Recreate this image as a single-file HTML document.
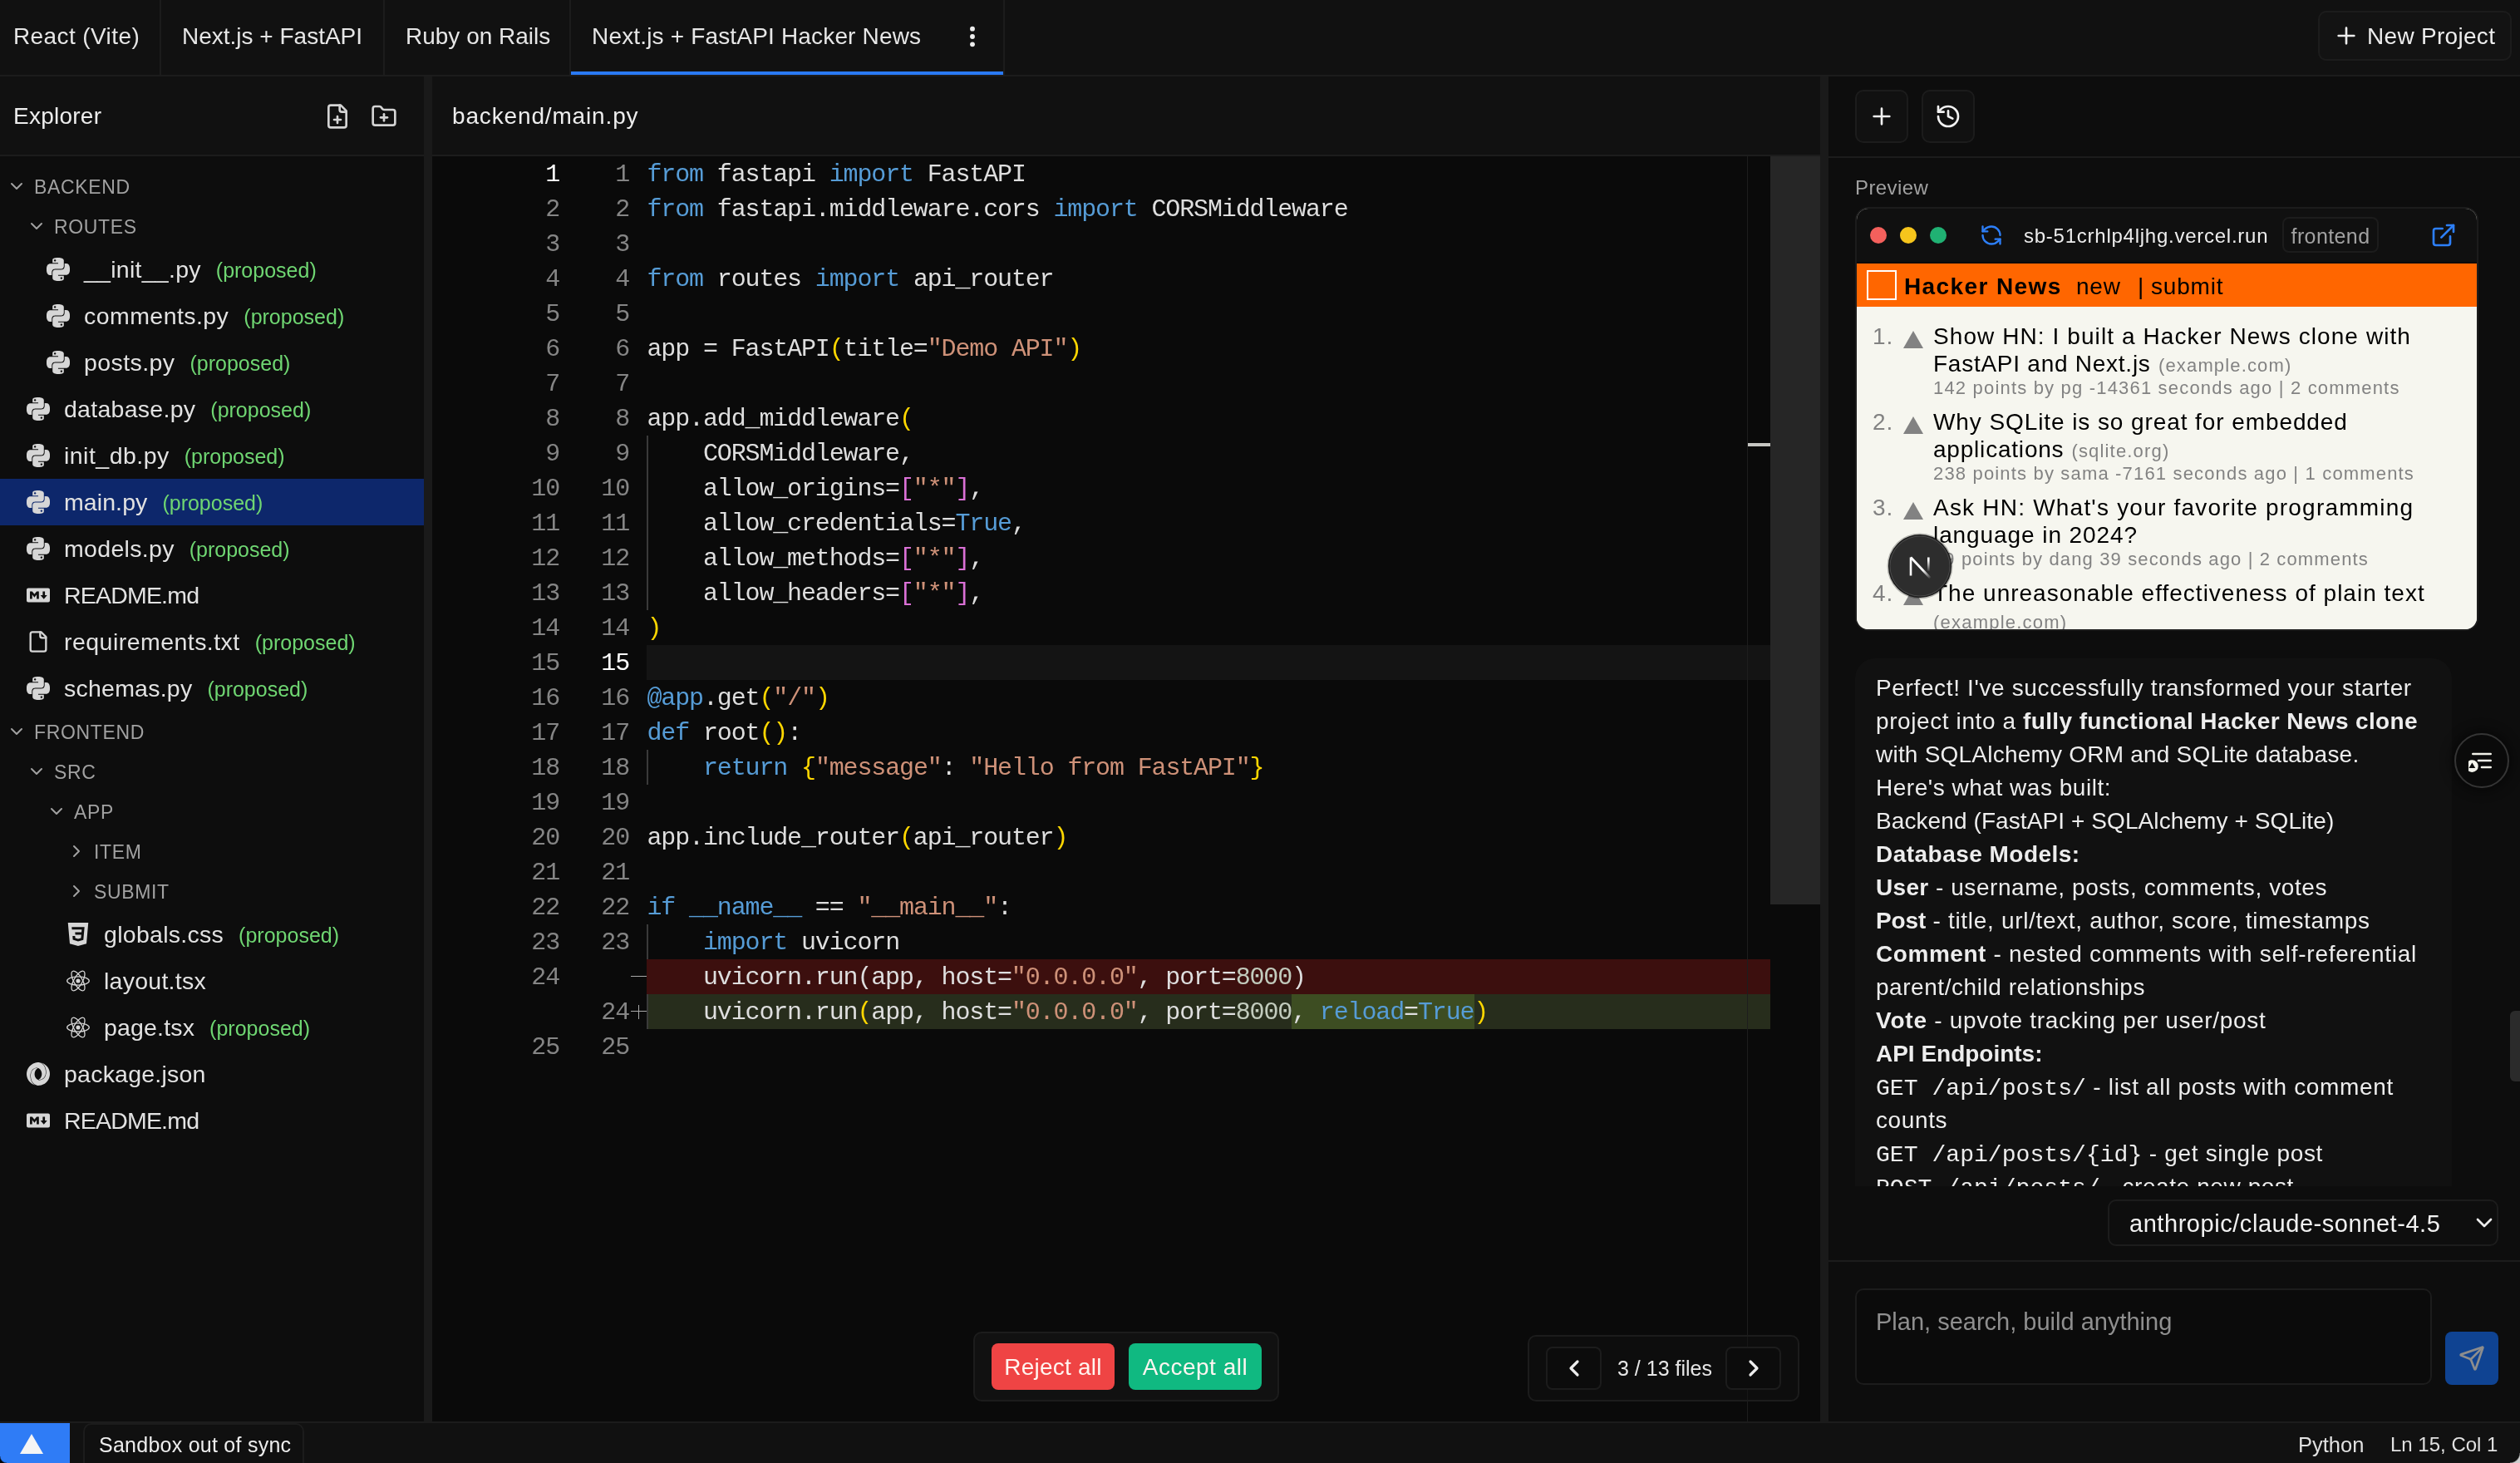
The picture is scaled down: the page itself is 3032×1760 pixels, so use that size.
<!DOCTYPE html>
<html>
<head>
<meta charset="utf-8">
<title>IDE</title>
<style>
*{box-sizing:border-box;margin:0;padding:0}
html,body{width:3032px;height:1760px;overflow:hidden;background:#0d0d0d;font-family:"Liberation Sans",sans-serif}
body{position:relative;font-family:"Liberation Sans",sans-serif;color:#ededed;font-size:28px}
#root{position:absolute;left:0;top:0;width:3032px;height:1760px;overflow:hidden;will-change:transform}
.abs{position:absolute}
svg{display:block}
/* ---------- top tab bar ---------- */
#tabbar{position:absolute;left:0;top:0;width:3032px;height:92px;background:#111111;border-bottom:2px solid #1c1c1c}
.tab{position:absolute;top:0;height:90px;border-right:2px solid #1c1c1c;line-height:88px;font-size:28px;color:#e6e6e6;white-space:nowrap}
.tab span{position:absolute;top:0;left:0}
#newproj{position:absolute;left:2789px;top:13px;width:233px;height:60px;border:2px solid #1c1c1c;border-radius:10px;background:#131313}
/* ---------- sidebar ---------- */
#sidebar{position:absolute;left:0;top:92px;width:510px;height:1618px;background:#0d0d0d}
#sidehead{position:absolute;left:0;top:0;width:510px;height:96px;background:#111111;border-bottom:2px solid #1c1c1c}
.split{position:absolute;top:92px;width:10px;height:1618px;background:#1a1a1a}
.row{position:absolute;left:0;width:510px;white-space:nowrap}
.frow{height:56px;line-height:56px;font-size:28.5px;color:#e2e2e2}
.drow{height:48px;line-height:50px;font-size:23px;color:#a1a1a1;letter-spacing:.65px}
.row .t{position:absolute;top:0}
.row .p{color:#6fd672;font-size:25px;margin-left:18px}
.row svg{position:absolute}
.sel{background:#0d276b}
/* ---------- editor ---------- */
#editor{position:absolute;left:520px;top:92px;width:1670px;height:1618px;background:#0a0a0a}
#edhead{position:absolute;left:0;top:0;width:1670px;height:96px;background:#111111;border-bottom:2px solid #1c1c1c}
#code{position:absolute;left:0;top:96px;width:1670px;height:1522px;font-family:"Liberation Mono",monospace;font-size:30px;letter-spacing:-1.143px;line-height:44px;white-space:pre}
.ln{position:absolute;left:0;width:1670px;height:42px}
.ln .a,.ln .b{position:absolute;top:0;text-align:right;color:#858585}
.ln .a{left:0;width:153px}
.ln .b{left:153px;width:84px}
.lbg{position:absolute;left:258px;top:0;width:1352px;height:42px}
.ins{}
.ln .w{color:#ffffff}
.ln .c{position:absolute;left:258.5px;top:0;color:#dedede}
.k{color:#569cd6}.s{color:#ce9178}.y{color:#ffd700}.m{color:#da70d6}.n{color:#c2cbbd}.w{color:#ffffff}
.guide{position:absolute;left:258px;width:2px;background:#3a3a3a}
.btn{height:56px;line-height:58px;border-radius:8px;text-align:center;font-size:28px;color:#fff5f0}
.nbtn{width:67px;height:52px;border:2px solid #1c1c1c;border-radius:8px;background:#0c0c0c}
/* ---------- right panel ---------- */
#right{position:absolute;left:2200px;top:92px;width:832px;height:1618px;background:#0d0d0d}
.ibtn{position:absolute;width:64px;height:64px;border:2px solid #1c1c1c;border-radius:10px;background:#111111}
#card{position:absolute;left:32px;top:157px;width:750px;height:510px;border:2px solid #1c1c1c;border-radius:16px;overflow:hidden;background:#f6f6ef}
.dot{position:absolute;top:22px;width:20px;height:20px;border-radius:50%}
#hn{position:absolute;left:0;top:66px;width:746px;height:440px;background:#f6f6ef;color:#000;overflow:hidden}
.hb{font-weight:bold;font-size:28px;line-height:36px;letter-spacing:1.4px;white-space:nowrap;color:#000}
.ht{font-size:28px;line-height:36px;letter-spacing:.8px;white-space:nowrap;color:#000}
.hnum{position:absolute;left:19px;font-size:28px;line-height:34px;color:#828282;letter-spacing:1px}
.htri{position:absolute;left:56px;width:0;height:0;border-left:12px solid transparent;border-right:12px solid transparent;border-bottom:21px solid #828282}
.htitle{position:absolute;left:92px;font-size:28px;line-height:33px;color:#000;letter-spacing:1.1px;white-space:nowrap}
.hsite{position:absolute;font-size:22px;line-height:26px;color:#828282;white-space:nowrap}
.hsub{position:absolute;left:92px;font-size:22px;line-height:26px;color:#828282;letter-spacing:1.15px;white-space:nowrap}
#chat{position:absolute;left:0;top:667px;width:832px;height:668px;overflow:hidden}
#bubble{position:absolute;left:32px;top:33px;width:718px;height:800px;background:#111111;border-radius:24px;font-size:28px;color:#ededed}
.cl{position:absolute;left:25px;height:40px;line-height:40px;white-space:pre}
.cl code{font-family:"Liberation Mono",monospace;font-size:28.1px;letter-spacing:0;line-height:20px}
/* ---------- status ---------- */
#status{position:absolute;left:0;top:1710px;width:3032px;height:50px;background:#111111;border-top:2px solid #1c1c1c;font-size:25px;color:#e0e0e0}
</style>
</head>
<body>
<div id="root">

<!-- TABBAR -->
<div id="tabbar">
  <div class="tab" style="left:0;width:194px"><span style="left:16px;letter-spacing:.4px">React (Vite)</span></div>
  <div class="tab" style="left:194px;width:269px"><span style="left:25px">Next.js + FastAPI</span></div>
  <div class="tab" style="left:463px;width:224px"><span style="left:25px">Ruby on Rails</span></div>
  <div class="tab" style="left:687px;width:522px"><div class="abs" style="left:0;top:86px;width:520px;height:4px;background:#2a7af5"></div><span style="left:25px;letter-spacing:.17px">Next.js + FastAPI Hacker News</span>
    <svg style="position:absolute;left:467px;top:28px" width="32" height="32" viewBox="0 0 24 24" fill="#ededed"><circle cx="12" cy="5" r="2.2"/><circle cx="12" cy="12" r="2.2"/><circle cx="12" cy="19" r="2.2"/></svg>
  </div>
  <div id="newproj">
    <svg style="position:absolute;left:16px;top:12px" width="32" height="32" viewBox="0 0 24 24" fill="none" stroke="#ededed" stroke-width="2" stroke-linecap="round"><path d="M5 12h14M12 5v14"/></svg>
    <span style="position:absolute;left:57px;top:0;line-height:57px;font-size:28px;letter-spacing:.3px;white-space:nowrap">New Project</span>
  </div>
</div>

<!-- SIDEBAR -->
<div id="sidebar">
  <div id="sidehead">
    <span class="abs" style="left:16px;top:0;line-height:95px;font-size:28px;letter-spacing:.25px">Explorer</span>
    <svg class="abs" style="left:390px;top:32px" width="32" height="32" viewBox="0 0 24 24" fill="none" stroke="#d4d4d4" stroke-width="2" stroke-linecap="round" stroke-linejoin="round"><path d="M15 2H6a2 2 0 0 0-2 2v16a2 2 0 0 0 2 2h12a2 2 0 0 0 2-2V7Z"/><path d="M14 2v4a2 2 0 0 0 2 2h4"/><path d="M9 15h6"/><path d="M12 18v-6"/></svg>
    <svg class="abs" style="left:446px;top:32px" width="32" height="32" viewBox="0 0 24 24" fill="none" stroke="#d4d4d4" stroke-width="2" stroke-linecap="round" stroke-linejoin="round"><path d="M12 10v6"/><path d="M9 13h6"/><path d="M20 20a2 2 0 0 0 2-2V8a2 2 0 0 0-2-2h-7.9a2 2 0 0 1-1.69-.9L9.6 3.9A2 2 0 0 0 7.93 3H4a2 2 0 0 0-2 2v13a2 2 0 0 0 2 2Z"/></svg>
  </div>
  <div id="tree">
<div class="row drow" style="top:108px"><svg style="left:8px;top:12px" width="24" height="24" viewBox="0 0 24 24" fill="none" stroke="#a1a1a1" stroke-width="2" stroke-linecap="round" stroke-linejoin="round"><path d="m6 9 6 6 6-6"/></svg><span class="t" style="left:41px">BACKEND</span></div>
<div class="row drow" style="top:156px"><svg style="left:32px;top:12px" width="24" height="24" viewBox="0 0 24 24" fill="none" stroke="#a1a1a1" stroke-width="2" stroke-linecap="round" stroke-linejoin="round"><path d="m6 9 6 6 6-6"/></svg><span class="t" style="left:65px">ROUTES</span></div>
<div class="row frow" style="top:204px"><svg style="left:56px;top:14px" width="28" height="28" viewBox="0 0 24 24" fill="#d6d6d6"><path d="M14.25.18l.9.2.73.26.59.3.45.32.34.34.25.34.16.33.1.3.04.26.02.2-.01.13V8.5l-.05.63-.13.55-.21.46-.26.38-.3.31-.33.25-.35.19-.35.14-.33.1-.3.07-.26.04-.21.02H8.77l-.69.05-.59.14-.5.22-.41.27-.33.32-.27.35-.2.36-.15.37-.1.35-.07.32-.04.27-.02.21v3.06H3.17l-.21-.03-.28-.07-.32-.12-.35-.18-.36-.26-.36-.36-.35-.46-.32-.59-.28-.73-.21-.88-.14-1.05-.05-1.23.06-1.22.16-1.04.24-.87.32-.71.36-.57.4-.44.42-.33.42-.24.4-.16.36-.1.32-.05.24-.01h.16l.06.01h8.16v-.83H6.18l-.01-2.75-.02-.37.05-.34.11-.31.17-.28.25-.26.31-.23.38-.2.44-.18.51-.15.58-.12.64-.1.71-.06.77-.04.84-.02 1.27.05zm-6.3 1.98l-.23.33-.08.41.08.41.23.34.33.22.41.09.41-.09.33-.22.23-.34.08-.41-.08-.41-.23-.33-.33-.22-.41-.09-.41.09zm13.09 3.95l.28.06.32.12.35.18.36.27.36.35.35.47.32.59.28.73.21.88.14 1.04.05 1.23-.06 1.23-.16 1.04-.24.86-.32.71-.36.57-.4.45-.42.33-.42.24-.4.16-.36.09-.32.05-.24.02-.16-.01h-8.22v.82h5.84l.01 2.76.02.36-.05.34-.11.31-.17.29-.25.25-.31.24-.38.2-.44.17-.51.15-.58.13-.64.09-.71.07-.77.04-.84.01-1.27-.04-1.07-.14-.9-.2-.73-.25-.59-.3-.45-.33-.34-.34-.25-.34-.16-.33-.1-.3-.04-.25-.02-.2.01-.13v-5.34l.05-.64.13-.54.21-.46.26-.38.3-.32.33-.24.35-.2.35-.14.33-.1.3-.06.26-.04.21-.02.13-.01h5.84l.69-.05.59-.14.5-.21.41-.28.33-.32.27-.35.2-.36.15-.36.1-.35.07-.32.04-.28.02-.21V6.07h2.09l.14.01zm-6.47 14.25l-.23.33-.08.41.08.41.23.33.33.23.41.08.41-.08.33-.23.23-.33.08-.41-.08-.41-.23-.33-.33-.23-.41-.08-.41.08z"/></svg><span class="t" style="left:101px"><span style="letter-spacing:0.268px">__init__.py</span><span class="p">(proposed)</span></span></div>
<div class="row frow" style="top:260px"><svg style="left:56px;top:14px" width="28" height="28" viewBox="0 0 24 24" fill="#d6d6d6"><path d="M14.25.18l.9.2.73.26.59.3.45.32.34.34.25.34.16.33.1.3.04.26.02.2-.01.13V8.5l-.05.63-.13.55-.21.46-.26.38-.3.31-.33.25-.35.19-.35.14-.33.1-.3.07-.26.04-.21.02H8.77l-.69.05-.59.14-.5.22-.41.27-.33.32-.27.35-.2.36-.15.37-.1.35-.07.32-.04.27-.02.21v3.06H3.17l-.21-.03-.28-.07-.32-.12-.35-.18-.36-.26-.36-.36-.35-.46-.32-.59-.28-.73-.21-.88-.14-1.05-.05-1.23.06-1.22.16-1.04.24-.87.32-.71.36-.57.4-.44.42-.33.42-.24.4-.16.36-.1.32-.05.24-.01h.16l.06.01h8.16v-.83H6.18l-.01-2.75-.02-.37.05-.34.11-.31.17-.28.25-.26.31-.23.38-.2.44-.18.51-.15.58-.12.64-.1.71-.06.77-.04.84-.02 1.27.05zm-6.3 1.98l-.23.33-.08.41.08.41.23.34.33.22.41.09.41-.09.33-.22.23-.34.08-.41-.08-.41-.23-.33-.33-.22-.41-.09-.41.09zm13.09 3.95l.28.06.32.12.35.18.36.27.36.35.35.47.32.59.28.73.21.88.14 1.04.05 1.23-.06 1.23-.16 1.04-.24.86-.32.71-.36.57-.4.45-.42.33-.42.24-.4.16-.36.09-.32.05-.24.02-.16-.01h-8.22v.82h5.84l.01 2.76.02.36-.05.34-.11.31-.17.29-.25.25-.31.24-.38.2-.44.17-.51.15-.58.13-.64.09-.71.07-.77.04-.84.01-1.27-.04-1.07-.14-.9-.2-.73-.25-.59-.3-.45-.33-.34-.34-.25-.34-.16-.33-.1-.3-.04-.25-.02-.2.01-.13v-5.34l.05-.64.13-.54.21-.46.26-.38.3-.32.33-.24.35-.2.35-.14.33-.1.3-.06.26-.04.21-.02.13-.01h5.84l.69-.05.59-.14.5-.21.41-.28.33-.32.27-.35.2-.36.15-.36.1-.35.07-.32.04-.28.02-.21V6.07h2.09l.14.01zm-6.47 14.25l-.23.33-.08.41.08.41.23.33.33.23.41.08.41-.08.33-.23.23-.33.08-.41-.08-.41-.23-.33-.33-.23-.41-.08-.41.08z"/></svg><span class="t" style="left:101px"><span style="letter-spacing:0.439px">comments.py</span><span class="p">(proposed)</span></span></div>
<div class="row frow" style="top:316px"><svg style="left:56px;top:14px" width="28" height="28" viewBox="0 0 24 24" fill="#d6d6d6"><path d="M14.25.18l.9.2.73.26.59.3.45.32.34.34.25.34.16.33.1.3.04.26.02.2-.01.13V8.5l-.05.63-.13.55-.21.46-.26.38-.3.31-.33.25-.35.19-.35.14-.33.1-.3.07-.26.04-.21.02H8.77l-.69.05-.59.14-.5.22-.41.27-.33.32-.27.35-.2.36-.15.37-.1.35-.07.32-.04.27-.02.21v3.06H3.17l-.21-.03-.28-.07-.32-.12-.35-.18-.36-.26-.36-.36-.35-.46-.32-.59-.28-.73-.21-.88-.14-1.05-.05-1.23.06-1.22.16-1.04.24-.87.32-.71.36-.57.4-.44.42-.33.42-.24.4-.16.36-.1.32-.05.24-.01h.16l.06.01h8.16v-.83H6.18l-.01-2.75-.02-.37.05-.34.11-.31.17-.28.25-.26.31-.23.38-.2.44-.18.51-.15.58-.12.64-.1.71-.06.77-.04.84-.02 1.27.05zm-6.3 1.98l-.23.33-.08.41.08.41.23.34.33.22.41.09.41-.09.33-.22.23-.34.08-.41-.08-.41-.23-.33-.33-.22-.41-.09-.41.09zm13.09 3.95l.28.06.32.12.35.18.36.27.36.35.35.47.32.59.28.73.21.88.14 1.04.05 1.23-.06 1.23-.16 1.04-.24.86-.32.71-.36.57-.4.45-.42.33-.42.24-.4.16-.36.09-.32.05-.24.02-.16-.01h-8.22v.82h5.84l.01 2.76.02.36-.05.34-.11.31-.17.29-.25.25-.31.24-.38.2-.44.17-.51.15-.58.13-.64.09-.71.07-.77.04-.84.01-1.27-.04-1.07-.14-.9-.2-.73-.25-.59-.3-.45-.33-.34-.34-.25-.34-.16-.33-.1-.3-.04-.25-.02-.2.01-.13v-5.34l.05-.64.13-.54.21-.46.26-.38.3-.32.33-.24.35-.2.35-.14.33-.1.3-.06.26-.04.21-.02.13-.01h5.84l.69-.05.59-.14.5-.21.41-.28.33-.32.27-.35.2-.36.15-.36.1-.35.07-.32.04-.28.02-.21V6.07h2.09l.14.01zm-6.47 14.25l-.23.33-.08.41.08.41.23.33.33.23.41.08.41-.08.33-.23.23-.33.08-.41-.08-.41-.23-.33-.33-.23-.41-.08-.41.08z"/></svg><span class="t" style="left:101px"><span style="letter-spacing:0.42px">posts.py</span><span class="p">(proposed)</span></span></div>
<div class="row frow" style="top:372px"><svg style="left:32px;top:14px" width="28" height="28" viewBox="0 0 24 24" fill="#d6d6d6"><path d="M14.25.18l.9.2.73.26.59.3.45.32.34.34.25.34.16.33.1.3.04.26.02.2-.01.13V8.5l-.05.63-.13.55-.21.46-.26.38-.3.31-.33.25-.35.19-.35.14-.33.1-.3.07-.26.04-.21.02H8.77l-.69.05-.59.14-.5.22-.41.27-.33.32-.27.35-.2.36-.15.37-.1.35-.07.32-.04.27-.02.21v3.06H3.17l-.21-.03-.28-.07-.32-.12-.35-.18-.36-.26-.36-.36-.35-.46-.32-.59-.28-.73-.21-.88-.14-1.05-.05-1.23.06-1.22.16-1.04.24-.87.32-.71.36-.57.4-.44.42-.33.42-.24.4-.16.36-.1.32-.05.24-.01h.16l.06.01h8.16v-.83H6.18l-.01-2.75-.02-.37.05-.34.11-.31.17-.28.25-.26.31-.23.38-.2.44-.18.51-.15.58-.12.64-.1.71-.06.77-.04.84-.02 1.27.05zm-6.3 1.98l-.23.33-.08.41.08.41.23.34.33.22.41.09.41-.09.33-.22.23-.34.08-.41-.08-.41-.23-.33-.33-.22-.41-.09-.41.09zm13.09 3.95l.28.06.32.12.35.18.36.27.36.35.35.47.32.59.28.73.21.88.14 1.04.05 1.23-.06 1.23-.16 1.04-.24.86-.32.71-.36.57-.4.45-.42.33-.42.24-.4.16-.36.09-.32.05-.24.02-.16-.01h-8.22v.82h5.84l.01 2.76.02.36-.05.34-.11.31-.17.29-.25.25-.31.24-.38.2-.44.17-.51.15-.58.13-.64.09-.71.07-.77.04-.84.01-1.27-.04-1.07-.14-.9-.2-.73-.25-.59-.3-.45-.33-.34-.34-.25-.34-.16-.33-.1-.3-.04-.25-.02-.2.01-.13v-5.34l.05-.64.13-.54.21-.46.26-.38.3-.32.33-.24.35-.2.35-.14.33-.1.3-.06.26-.04.21-.02.13-.01h5.84l.69-.05.59-.14.5-.21.41-.28.33-.32.27-.35.2-.36.15-.36.1-.35.07-.32.04-.28.02-.21V6.07h2.09l.14.01zm-6.47 14.25l-.23.33-.08.41.08.41.23.33.33.23.41.08.41-.08.33-.23.23-.33.08-.41-.08-.41-.23-.33-.33-.23-.41-.08-.41.08z"/></svg><span class="t" style="left:77px"><span style="letter-spacing:0.274px">database.py</span><span class="p">(proposed)</span></span></div>
<div class="row frow" style="top:428px"><svg style="left:32px;top:14px" width="28" height="28" viewBox="0 0 24 24" fill="#d6d6d6"><path d="M14.25.18l.9.2.73.26.59.3.45.32.34.34.25.34.16.33.1.3.04.26.02.2-.01.13V8.5l-.05.63-.13.55-.21.46-.26.38-.3.31-.33.25-.35.19-.35.14-.33.1-.3.07-.26.04-.21.02H8.77l-.69.05-.59.14-.5.22-.41.27-.33.32-.27.35-.2.36-.15.37-.1.35-.07.32-.04.27-.02.21v3.06H3.17l-.21-.03-.28-.07-.32-.12-.35-.18-.36-.26-.36-.36-.35-.46-.32-.59-.28-.73-.21-.88-.14-1.05-.05-1.23.06-1.22.16-1.04.24-.87.32-.71.36-.57.4-.44.42-.33.42-.24.4-.16.36-.1.32-.05.24-.01h.16l.06.01h8.16v-.83H6.18l-.01-2.75-.02-.37.05-.34.11-.31.17-.28.25-.26.31-.23.38-.2.44-.18.51-.15.58-.12.64-.1.71-.06.77-.04.84-.02 1.27.05zm-6.3 1.98l-.23.33-.08.41.08.41.23.34.33.22.41.09.41-.09.33-.22.23-.34.08-.41-.08-.41-.23-.33-.33-.22-.41-.09-.41.09zm13.09 3.95l.28.06.32.12.35.18.36.27.36.35.35.47.32.59.28.73.21.88.14 1.04.05 1.23-.06 1.23-.16 1.04-.24.86-.32.71-.36.57-.4.45-.42.33-.42.24-.4.16-.36.09-.32.05-.24.02-.16-.01h-8.22v.82h5.84l.01 2.76.02.36-.05.34-.11.31-.17.29-.25.25-.31.24-.38.2-.44.17-.51.15-.58.13-.64.09-.71.07-.77.04-.84.01-1.27-.04-1.07-.14-.9-.2-.73-.25-.59-.3-.45-.33-.34-.34-.25-.34-.16-.33-.1-.3-.04-.25-.02-.2.01-.13v-5.34l.05-.64.13-.54.21-.46.26-.38.3-.32.33-.24.35-.2.35-.14.33-.1.3-.06.26-.04.21-.02.13-.01h5.84l.69-.05.59-.14.5-.21.41-.28.33-.32.27-.35.2-.36.15-.36.1-.35.07-.32.04-.28.02-.21V6.07h2.09l.14.01zm-6.47 14.25l-.23.33-.08.41.08.41.23.33.33.23.41.08.41-.08.33-.23.23-.33.08-.41-.08-.41-.23-.33-.33-.23-.41-.08-.41.08z"/></svg><span class="t" style="left:77px"><span style="letter-spacing:0.47px">init_db.py</span><span class="p">(proposed)</span></span></div>
<div class="row frow sel" style="top:484px"><svg style="left:32px;top:14px" width="28" height="28" viewBox="0 0 24 24" fill="#d6d6d6"><path d="M14.25.18l.9.2.73.26.59.3.45.32.34.34.25.34.16.33.1.3.04.26.02.2-.01.13V8.5l-.05.63-.13.55-.21.46-.26.38-.3.31-.33.25-.35.19-.35.14-.33.1-.3.07-.26.04-.21.02H8.77l-.69.05-.59.14-.5.22-.41.27-.33.32-.27.35-.2.36-.15.37-.1.35-.07.32-.04.27-.02.21v3.06H3.17l-.21-.03-.28-.07-.32-.12-.35-.18-.36-.26-.36-.36-.35-.46-.32-.59-.28-.73-.21-.88-.14-1.05-.05-1.23.06-1.22.16-1.04.24-.87.32-.71.36-.57.4-.44.42-.33.42-.24.4-.16.36-.1.32-.05.24-.01h.16l.06.01h8.16v-.83H6.18l-.01-2.75-.02-.37.05-.34.11-.31.17-.28.25-.26.31-.23.38-.2.44-.18.51-.15.58-.12.64-.1.71-.06.77-.04.84-.02 1.27.05zm-6.3 1.98l-.23.33-.08.41.08.41.23.34.33.22.41.09.41-.09.33-.22.23-.34.08-.41-.08-.41-.23-.33-.33-.22-.41-.09-.41.09zm13.09 3.95l.28.06.32.12.35.18.36.27.36.35.35.47.32.59.28.73.21.88.14 1.04.05 1.23-.06 1.23-.16 1.04-.24.86-.32.71-.36.57-.4.45-.42.33-.42.24-.4.16-.36.09-.32.05-.24.02-.16-.01h-8.22v.82h5.84l.01 2.76.02.36-.05.34-.11.31-.17.29-.25.25-.31.24-.38.2-.44.17-.51.15-.58.13-.64.09-.71.07-.77.04-.84.01-1.27-.04-1.07-.14-.9-.2-.73-.25-.59-.3-.45-.33-.34-.34-.25-.34-.16-.33-.1-.3-.04-.25-.02-.2.01-.13v-5.34l.05-.64.13-.54.21-.46.26-.38.3-.32.33-.24.35-.2.35-.14.33-.1.3-.06.26-.04.21-.02.13-.01h5.84l.69-.05.59-.14.5-.21.41-.28.33-.32.27-.35.2-.36.15-.36.1-.35.07-.32.04-.28.02-.21V6.07h2.09l.14.01zm-6.47 14.25l-.23.33-.08.41.08.41.23.33.33.23.41.08.41-.08.33-.23.23-.33.08-.41-.08-.41-.23-.33-.33-.23-.41-.08-.41.08z"/></svg><span class="t" style="left:77px"><span style="letter-spacing:0.087px">main.py</span><span class="p">(proposed)</span></span></div>
<div class="row frow" style="top:540px"><svg style="left:32px;top:14px" width="28" height="28" viewBox="0 0 24 24" fill="#d6d6d6"><path d="M14.25.18l.9.2.73.26.59.3.45.32.34.34.25.34.16.33.1.3.04.26.02.2-.01.13V8.5l-.05.63-.13.55-.21.46-.26.38-.3.31-.33.25-.35.19-.35.14-.33.1-.3.07-.26.04-.21.02H8.77l-.69.05-.59.14-.5.22-.41.27-.33.32-.27.35-.2.36-.15.37-.1.35-.07.32-.04.27-.02.21v3.06H3.17l-.21-.03-.28-.07-.32-.12-.35-.18-.36-.26-.36-.36-.35-.46-.32-.59-.28-.73-.21-.88-.14-1.05-.05-1.23.06-1.22.16-1.04.24-.87.32-.71.36-.57.4-.44.42-.33.42-.24.4-.16.36-.1.32-.05.24-.01h.16l.06.01h8.16v-.83H6.18l-.01-2.75-.02-.37.05-.34.11-.31.17-.28.25-.26.31-.23.38-.2.44-.18.51-.15.58-.12.64-.1.71-.06.77-.04.84-.02 1.27.05zm-6.3 1.98l-.23.33-.08.41.08.41.23.34.33.22.41.09.41-.09.33-.22.23-.34.08-.41-.08-.41-.23-.33-.33-.22-.41-.09-.41.09zm13.09 3.95l.28.06.32.12.35.18.36.27.36.35.35.47.32.59.28.73.21.88.14 1.04.05 1.23-.06 1.23-.16 1.04-.24.86-.32.71-.36.57-.4.45-.42.33-.42.24-.4.16-.36.09-.32.05-.24.02-.16-.01h-8.22v.82h5.84l.01 2.76.02.36-.05.34-.11.31-.17.29-.25.25-.31.24-.38.2-.44.17-.51.15-.58.13-.64.09-.71.07-.77.04-.84.01-1.27-.04-1.07-.14-.9-.2-.73-.25-.59-.3-.45-.33-.34-.34-.25-.34-.16-.33-.1-.3-.04-.25-.02-.2.01-.13v-5.34l.05-.64.13-.54.21-.46.26-.38.3-.32.33-.24.35-.2.35-.14.33-.1.3-.06.26-.04.21-.02.13-.01h5.84l.69-.05.59-.14.5-.21.41-.28.33-.32.27-.35.2-.36.15-.36.1-.35.07-.32.04-.28.02-.21V6.07h2.09l.14.01zm-6.47 14.25l-.23.33-.08.41.08.41.23.33.33.23.41.08.41-.08.33-.23.23-.33.08-.41-.08-.41-.23-.33-.33-.23-.41-.08-.41.08z"/></svg><span class="t" style="left:77px"><span style="letter-spacing:0.312px">models.py</span><span class="p">(proposed)</span></span></div>
<div class="row frow" style="top:596px"><svg style="left:32px;top:14px" width="28" height="28" viewBox="0 0 24 24" fill="#d6d6d6"><path d="M22.27 19.385H1.73A1.73 1.73 0 010 17.655V6.345a1.73 1.73 0 011.73-1.73h20.54A1.73 1.73 0 0124 6.345v11.308a1.73 1.73 0 01-1.73 1.731zM5.769 15.923v-4.5l2.308 2.885 2.307-2.885v4.5h2.308V8.078h-2.308l-2.307 2.885-2.308-2.885H3.46v7.847zM21.232 12h-2.309V8.077h-2.307V12h-2.308l3.461 4.039z"/></svg><span class="t" style="left:77px"><span style="letter-spacing:-0.805px">README.md</span></span></div>
<div class="row frow" style="top:652px"><svg style="left:32px;top:14px" width="28" height="28" viewBox="0 0 24 24" fill="#d6d6d6"><g fill="none" stroke="#d6d6d6" stroke-width="2" stroke-linecap="round" stroke-linejoin="round"><path d="M15 2H6a2 2 0 0 0-2 2v16a2 2 0 0 0 2 2h12a2 2 0 0 0 2-2V7Z"/><path d="M14 2v4a2 2 0 0 0 2 2h4"/></g></svg><span class="t" style="left:77px"><span style="letter-spacing:0.461px">requirements.txt</span><span class="p">(proposed)</span></span></div>
<div class="row frow" style="top:708px"><svg style="left:32px;top:14px" width="28" height="28" viewBox="0 0 24 24" fill="#d6d6d6"><path d="M14.25.18l.9.2.73.26.59.3.45.32.34.34.25.34.16.33.1.3.04.26.02.2-.01.13V8.5l-.05.63-.13.55-.21.46-.26.38-.3.31-.33.25-.35.19-.35.14-.33.1-.3.07-.26.04-.21.02H8.77l-.69.05-.59.14-.5.22-.41.27-.33.32-.27.35-.2.36-.15.37-.1.35-.07.32-.04.27-.02.21v3.06H3.17l-.21-.03-.28-.07-.32-.12-.35-.18-.36-.26-.36-.36-.35-.46-.32-.59-.28-.73-.21-.88-.14-1.05-.05-1.23.06-1.22.16-1.04.24-.87.32-.71.36-.57.4-.44.42-.33.42-.24.4-.16.36-.1.32-.05.24-.01h.16l.06.01h8.16v-.83H6.18l-.01-2.75-.02-.37.05-.34.11-.31.17-.28.25-.26.31-.23.38-.2.44-.18.51-.15.58-.12.64-.1.71-.06.77-.04.84-.02 1.27.05zm-6.3 1.98l-.23.33-.08.41.08.41.23.34.33.22.41.09.41-.09.33-.22.23-.34.08-.41-.08-.41-.23-.33-.33-.22-.41-.09-.41.09zm13.09 3.95l.28.06.32.12.35.18.36.27.36.35.35.47.32.59.28.73.21.88.14 1.04.05 1.23-.06 1.23-.16 1.04-.24.86-.32.71-.36.57-.4.45-.42.33-.42.24-.4.16-.36.09-.32.05-.24.02-.16-.01h-8.22v.82h5.84l.01 2.76.02.36-.05.34-.11.31-.17.29-.25.25-.31.24-.38.2-.44.17-.51.15-.58.13-.64.09-.71.07-.77.04-.84.01-1.27-.04-1.07-.14-.9-.2-.73-.25-.59-.3-.45-.33-.34-.34-.25-.34-.16-.33-.1-.3-.04-.25-.02-.2.01-.13v-5.34l.05-.64.13-.54.21-.46.26-.38.3-.32.33-.24.35-.2.35-.14.33-.1.3-.06.26-.04.21-.02.13-.01h5.84l.69-.05.59-.14.5-.21.41-.28.33-.32.27-.35.2-.36.15-.36.1-.35.07-.32.04-.28.02-.21V6.07h2.09l.14.01zm-6.47 14.25l-.23.33-.08.41.08.41.23.33.33.23.41.08.41-.08.33-.23.23-.33.08-.41-.08-.41-.23-.33-.33-.23-.41-.08-.41.08z"/></svg><span class="t" style="left:77px"><span style="letter-spacing:0.234px">schemas.py</span><span class="p">(proposed)</span></span></div>
<div class="row drow" style="top:764px"><svg style="left:8px;top:12px" width="24" height="24" viewBox="0 0 24 24" fill="none" stroke="#a1a1a1" stroke-width="2" stroke-linecap="round" stroke-linejoin="round"><path d="m6 9 6 6 6-6"/></svg><span class="t" style="left:41px">FRONTEND</span></div>
<div class="row drow" style="top:812px"><svg style="left:32px;top:12px" width="24" height="24" viewBox="0 0 24 24" fill="none" stroke="#a1a1a1" stroke-width="2" stroke-linecap="round" stroke-linejoin="round"><path d="m6 9 6 6 6-6"/></svg><span class="t" style="left:65px">SRC</span></div>
<div class="row drow" style="top:860px"><svg style="left:56px;top:12px" width="24" height="24" viewBox="0 0 24 24" fill="none" stroke="#a1a1a1" stroke-width="2" stroke-linecap="round" stroke-linejoin="round"><path d="m6 9 6 6 6-6"/></svg><span class="t" style="left:89px">APP</span></div>
<div class="row drow" style="top:908px"><svg style="left:80px;top:12px" width="24" height="24" viewBox="0 0 24 24" fill="none" stroke="#a1a1a1" stroke-width="2" stroke-linecap="round" stroke-linejoin="round"><path d="m9 18 6-6-6-6"/></svg><span class="t" style="left:113px">ITEM</span></div>
<div class="row drow" style="top:956px"><svg style="left:80px;top:12px" width="24" height="24" viewBox="0 0 24 24" fill="none" stroke="#a1a1a1" stroke-width="2" stroke-linecap="round" stroke-linejoin="round"><path d="m9 18 6-6-6-6"/></svg><span class="t" style="left:113px">SUBMIT</span></div>
<div class="row frow" style="top:1004px"><svg style="left:80px;top:14px" width="28" height="28" viewBox="0 0 24 24" fill="#d6d6d6"><path d="M1.5 0h21l-1.91 21.563L11.977 24l-8.565-2.438L1.5 0zm17.09 4.413L5.41 4.41l.213 2.622 10.125.002-.255 2.716h-6.64l.24 2.573h6.182l-.366 3.523-2.91.804-2.956-.81-.188-2.11h-2.61l.29 3.855L12 19.288l5.373-1.53L18.59 4.414z"/></svg><span class="t" style="left:125px"><span style="letter-spacing:0.283px">globals.css</span><span class="p">(proposed)</span></span></div>
<div class="row frow" style="top:1060px"><svg style="left:80px;top:14px" width="28" height="28" viewBox="0 0 24 24" fill="#d6d6d6"><g fill="none" stroke="#d6d6d6" stroke-width="1.1"><ellipse cx="12" cy="12" rx="11.4" ry="4.4"/><ellipse cx="12" cy="12" rx="11.4" ry="4.4" transform="rotate(60 12 12)"/><ellipse cx="12" cy="12" rx="11.4" ry="4.4" transform="rotate(120 12 12)"/></g><circle cx="12" cy="12" r="2.2"/></svg><span class="t" style="left:125px"><span style="letter-spacing:0.261px">layout.tsx</span></span></div>
<div class="row frow" style="top:1116px"><svg style="left:80px;top:14px" width="28" height="28" viewBox="0 0 24 24" fill="#d6d6d6"><g fill="none" stroke="#d6d6d6" stroke-width="1.1"><ellipse cx="12" cy="12" rx="11.4" ry="4.4"/><ellipse cx="12" cy="12" rx="11.4" ry="4.4" transform="rotate(60 12 12)"/><ellipse cx="12" cy="12" rx="11.4" ry="4.4" transform="rotate(120 12 12)"/></g><circle cx="12" cy="12" r="2.2"/></svg><span class="t" style="left:125px"><span style="letter-spacing:0.17px">page.tsx</span><span class="p">(proposed)</span></span></div>
<div class="row frow" style="top:1172px"><svg style="left:32px;top:14px" width="28" height="28" viewBox="0 0 24 24" fill="#d6d6d6"><path d="M12.043 23.968c.479-.004.953-.029 1.426-.094a11.805 11.805 0 003.146-.863 12.404 12.404 0 003.793-2.542 11.977 11.977 0 002.44-3.427 11.794 11.794 0 001.02-3.476c.149-1.16.135-2.346-.045-3.499a11.96 11.96 0 00-.793-2.788 11.197 11.197 0 00-.854-1.617c-1.168-1.837-2.861-3.314-4.81-4.3a12.835 12.835 0 00-2.172-.87h-.005c.119.063.24.132.345.201.12.074.239.146.351.225a8.93 8.93 0 011.559 1.33c1.063 1.145 1.797 2.548 2.218 4.041.284.982.434 1.998.495 3.017.044.743.044 1.491-.047 2.229-.149 1.27-.554 2.51-1.228 3.596a7.475 7.475 0 01-1.903 2.084c-1.244.928-2.877 1.482-4.436 1.114a3.916 3.916 0 01-.748-.258 4.692 4.692 0 01-.779-.45 6.08 6.08 0 01-1.244-1.105 6.507 6.507 0 01-1.049-1.747 7.366 7.366 0 01-.494-2.54c-.03-1.273.225-2.553.854-3.67a6.43 6.43 0 011.663-1.918c.225-.178.464-.333.704-.479l.016-.007a5.121 5.121 0 00-1.441-.12 4.963 4.963 0 00-1.228.24c-.359.12-.704.27-1.019.45a6.146 6.146 0 00-.733.494c-.211.18-.42.36-.615.555-1.123 1.153-1.768 2.682-2.022 4.256-.15.973-.15 1.96-.091 2.95.105 1.395.391 2.787.945 4.062a8.518 8.518 0 001.348 2.173 8.14 8.14 0 003.132 2.23 7.934 7.934 0 002.113.54c.074.015.149.015.209.015zm-2.934-.398a4.102 4.102 0 01-.45-.228 8.5 8.5 0 01-2.038-1.534c-1.094-1.137-1.827-2.566-2.247-4.08a15.184 15.184 0 01-.495-3.172 12.14 12.14 0 01.046-2.082c.135-1.257.495-2.501 1.124-3.58a6.889 6.889 0 011.783-2.053 6.23 6.23 0 011.633-.9 5.363 5.363 0 013.522-.045c.029 0 .029 0 .045.03.015.015.045.015.06.03.045.016.104.045.165.074.239.12.479.271.704.42a6.294 6.294 0 012.097 2.502c.42.914.615 1.934.631 2.938.014 1.079-.18 2.157-.645 3.146a6.42 6.42 0 01-2.638 2.832c.09.03.18.045.271.075.225.044.449.074.688.074 1.468.045 2.892-.66 3.94-1.647.195-.18.375-.375.54-.585.225-.27.435-.54.614-.823.239-.375.435-.75.614-1.154a8.112 8.112 0 00.509-1.664c.196-1.004.211-2.022.149-3.026-.135-2.022-.673-4.045-1.842-5.724a9.054 9.054 0 00-.555-.719 9.868 9.868 0 00-1.063-1.034 8.477 8.477 0 00-1.363-.915 9.927 9.927 0 00-1.692-.598l-.3-.06c-.209-.03-.42-.044-.634-.06a8.453 8.453 0 00-1.015.016c-.704.045-1.412.16-2.112.337C5.799 1.227 2.863 3.566 1.3 6.67A11.834 11.834 0 00.238 9.801a11.81 11.81 0 00-.104 3.775c.12 1.02.374 2.023.778 2.977.227.57.511 1.124.825 1.648 1.094 1.783 2.683 3.236 4.51 4.24.688.39 1.408.69 2.157.944.226.074.45.15.689.21z"/></svg><span class="t" style="left:77px"><span style="letter-spacing:0.229px">package.json</span></span></div>
<div class="row frow" style="top:1228px"><svg style="left:32px;top:14px" width="28" height="28" viewBox="0 0 24 24" fill="#d6d6d6"><path d="M22.27 19.385H1.73A1.73 1.73 0 010 17.655V6.345a1.73 1.73 0 011.73-1.73h20.54A1.73 1.73 0 0124 6.345v11.308a1.73 1.73 0 01-1.73 1.731zM5.769 15.923v-4.5l2.308 2.885 2.307-2.885v4.5h2.308V8.078h-2.308l-2.307 2.885-2.308-2.885H3.46v7.847zM21.232 12h-2.309V8.077h-2.307V12h-2.308l3.461 4.039z"/></svg><span class="t" style="left:77px"><span style="letter-spacing:-0.805px">README.md</span></span></div>
</div>
</div>
<div class="split" style="left:510px"></div>

<!-- EDITOR -->
<div id="editor">
  <div id="edhead"><span class="abs" style="left:24px;top:0;line-height:95px;font-size:28px;letter-spacing:.85px">backend/main.py</span></div>
  <div id="code">
<div class="ln" style="top:0px"><span class="a w">1</span><span class="b">1</span><span class="c"><span class="k">from</span> fastapi <span class="k">import</span> FastAPI</span></div>
<div class="ln" style="top:42px"><span class="a">2</span><span class="b">2</span><span class="c"><span class="k">from</span> fastapi.middleware.cors <span class="k">import</span> CORSMiddleware</span></div>
<div class="ln" style="top:84px"><span class="a">3</span><span class="b">3</span><span class="c"></span></div>
<div class="ln" style="top:126px"><span class="a">4</span><span class="b">4</span><span class="c"><span class="k">from</span> routes <span class="k">import</span> api_router</span></div>
<div class="ln" style="top:168px"><span class="a">5</span><span class="b">5</span><span class="c"></span></div>
<div class="ln" style="top:210px"><span class="a">6</span><span class="b">6</span><span class="c">app = FastAPI<span class="y">(</span>title=<span class="s">&quot;Demo API&quot;</span><span class="y">)</span></span></div>
<div class="ln" style="top:252px"><span class="a">7</span><span class="b">7</span><span class="c"></span></div>
<div class="ln" style="top:294px"><span class="a">8</span><span class="b">8</span><span class="c">app.add_middleware<span class="y">(</span></span></div>
<div class="ln" style="top:336px"><span class="a">9</span><span class="b">9</span><span class="c">    CORSMiddleware,</span></div>
<div class="ln" style="top:378px"><span class="a">10</span><span class="b">10</span><span class="c">    allow_origins=<span class="m">[</span><span class="s">&quot;*&quot;</span><span class="m">]</span>,</span></div>
<div class="ln" style="top:420px"><span class="a">11</span><span class="b">11</span><span class="c">    allow_credentials=<span class="k">True</span>,</span></div>
<div class="ln" style="top:462px"><span class="a">12</span><span class="b">12</span><span class="c">    allow_methods=<span class="m">[</span><span class="s">&quot;*&quot;</span><span class="m">]</span>,</span></div>
<div class="ln" style="top:504px"><span class="a">13</span><span class="b">13</span><span class="c">    allow_headers=<span class="m">[</span><span class="s">&quot;*&quot;</span><span class="m">]</span>,</span></div>
<div class="ln" style="top:546px"><span class="a">14</span><span class="b">14</span><span class="c"><span class="y">)</span></span></div>
<div class="ln" style="top:588px"><div class="lbg" style="background:#141414"></div><span class="a">15</span><span class="b w">15</span><span class="c"></span></div>
<div class="ln" style="top:630px"><span class="a">16</span><span class="b">16</span><span class="c"><span class="k">@app</span>.get<span class="y">(</span><span class="s">&quot;/&quot;</span><span class="y">)</span></span></div>
<div class="ln" style="top:672px"><span class="a">17</span><span class="b">17</span><span class="c"><span class="k">def</span> root<span class="y">()</span>:</span></div>
<div class="ln" style="top:714px"><span class="a">18</span><span class="b">18</span><span class="c">    <span class="k">return</span> <span class="y">{</span><span class="s">&quot;message&quot;</span>: <span class="s">&quot;Hello from FastAPI&quot;</span><span class="y">}</span></span></div>
<div class="ln" style="top:756px"><span class="a">19</span><span class="b">19</span><span class="c"></span></div>
<div class="ln" style="top:798px"><span class="a">20</span><span class="b">20</span><span class="c">app.include_router<span class="y">(</span>api_router<span class="y">)</span></span></div>
<div class="ln" style="top:840px"><span class="a">21</span><span class="b">21</span><span class="c"></span></div>
<div class="ln" style="top:882px"><span class="a">22</span><span class="b">22</span><span class="c"><span class="k">if</span> <span class="k">__name__</span> == <span class="s">&quot;__main__&quot;</span>:</span></div>
<div class="ln" style="top:924px"><span class="a">23</span><span class="b">23</span><span class="c">    <span class="k">import</span> uvicorn</span></div>
<div class="ln" style="top:966px"><div class="lbg" style="background:#3c0f0e"></div><span class="a">24</span><span class="b"></span><div class="abs" style="left:239px;top:20px;width:19px;height:1.4px;background:#a8a8a8"></div><span class="c">    uvicorn.run(app, host=<span class="s">&quot;0.0.0.0&quot;</span>, port=<span class="n">8000</span>)</span></div>
<div class="ln" style="top:1008px"><div class="lbg" style="background:#272d1c"></div><div class="abs" style="left:1034px;top:0;width:219.5px;height:42px;background:#3d4d22"></div><span class="a"></span><span class="b">24</span><div class="abs" style="left:239px;top:20px;width:19px;height:1.4px;background:#a8a8a8"></div><div class="abs" style="left:247.8px;top:12.5px;width:1.4px;height:17px;background:#a8a8a8"></div><span class="c">    uvicorn.run<span class="y">(</span>app, host=<span class="s">&quot;0.0.0.0&quot;</span>, port=<span class="n">8000</span><span class="ins">, <span class="k">reload</span>=<span class="k">True</span></span><span class="y">)</span></span></div>
<div class="ln" style="top:1050px"><span class="a">25</span><span class="b">25</span><span class="c"></span></div>
<div class="guide" style="top:336px;height:210px"></div>
<div class="guide" style="top:714px;height:42px"></div>
<div class="guide" style="top:924px;height:42px"></div>
<div class="guide" style="top:1008px;height:42px"></div>
</div>
  <!-- overview ruler + slider -->
  <div class="abs" style="left:1582px;top:96px;width:1.3px;height:1522px;background:#1d1d1d"></div>
  <div class="abs" style="left:1610px;top:96px;width:60px;height:900px;background:#262626"></div>
  <div class="abs" style="left:1583px;top:441px;width:27px;height:4px;background:#c6c6c2"></div>
  <!-- accept / reject -->
  <div class="abs" style="left:651px;top:1510px;width:368px;height:84px;background:#111111;border:2px solid #1c1c1c;border-radius:10px">
    <div class="abs btn" style="left:20px;top:12px;width:148px;background:#ef4444;letter-spacing:.25px">Reject all</div>
    <div class="abs btn" style="left:185px;top:12px;width:160px;background:#10b981;letter-spacing:.5px">Accept all</div>
  </div>
  <!-- file nav -->
  <div class="abs" style="left:1318px;top:1514px;width:327px;height:80px;background:rgba(17,17,17,.55);border:2px solid #1c1c1c;border-radius:10px">
    <div class="abs nbtn" style="left:20px;top:12px"><svg style="left:16px;top:8px;position:absolute" width="32" height="32" viewBox="0 0 24 24" fill="none" stroke="#ededed" stroke-width="2.4" stroke-linecap="round" stroke-linejoin="round"><path d="m15 18-6-6 6-6"/></svg></div>
    <span class="abs" style="left:106px;top:0;line-height:76px;font-size:25px;color:#e6e6e6;white-space:nowrap">3 / 13 files</span>
    <div class="abs nbtn" style="left:236px;top:12px"><svg style="left:16px;top:8px;position:absolute" width="32" height="32" viewBox="0 0 24 24" fill="none" stroke="#ededed" stroke-width="2.4" stroke-linecap="round" stroke-linejoin="round"><path d="m9 18 6-6-6-6"/></svg></div>
  </div>
</div>
<div class="split" style="left:2190px"></div>

<!-- RIGHT -->
<div id="right">
  <div class="abs" style="left:0;top:0;width:832px;height:98px;border-bottom:2px solid #1c1c1c"></div>
  <div class="ibtn" style="left:32px;top:16px"><svg class="abs" style="left:14px;top:14px" width="32" height="32" viewBox="0 0 24 24" fill="none" stroke="#f2f2f2" stroke-width="2" stroke-linecap="round"><path d="M5 12h14M12 5v14"/></svg></div>
  <div class="ibtn" style="left:112px;top:16px"><svg class="abs" style="left:14px;top:14px" width="32" height="32" viewBox="0 0 24 24" fill="none" stroke="#f2f2f2" stroke-width="2" stroke-linecap="round" stroke-linejoin="round"><path d="M3 12a9 9 0 1 0 9-9 9.75 9.75 0 0 0-6.74 2.74L3 8"/><path d="M3 3v5h5"/><path d="M12 7v5l4 2"/></svg></div>
  <span class="abs" style="left:32px;top:118px;line-height:32px;font-size:24px;color:#a1a1a1;letter-spacing:.4px">Preview</span>

  <!-- preview card -->
  <div id="card">
    <div class="abs" style="left:0;top:0;width:746px;height:66px;background:#101010;border-bottom:2px solid #0a0a0a"></div>
    <div class="dot" style="left:16px;background:#f4605c"></div>
    <div class="dot" style="left:52px;background:#f6c51c"></div>
    <div class="dot" style="left:88px;background:#20b173"></div>
    <svg class="abs" style="left:148px;top:18px" width="28" height="28" viewBox="0 0 24 24" fill="none" stroke="#2d7ff9" stroke-width="2" stroke-linecap="round" stroke-linejoin="round"><path d="M21 12a9 9 0 0 0-9-9 9.75 9.75 0 0 0-6.74 2.74L3 8"/><path d="M3 3v5h5"/><path d="M3 12a9 9 0 0 0 9 9 9.75 9.75 0 0 0 6.74-2.74L21 16"/><path d="M16 16h5v5"/></svg>
    <span class="abs" style="left:201px;top:0;line-height:66px;font-size:24px;color:#ededed;letter-spacing:.75px;white-space:nowrap">sb-51crhlp4ljhg.vercel.run</span>
    <div class="abs" style="left:512px;top:10px;width:116px;height:43px;border:2px solid #1c1c1c;border-radius:8px;line-height:42px;text-align:center;font-size:25px;color:#a1a1a1;letter-spacing:.4px">frontend</div>
    <svg class="abs" style="left:690px;top:16px" width="32" height="32" viewBox="0 0 24 24" fill="none" stroke="#2d7ff9" stroke-width="2" stroke-linecap="round" stroke-linejoin="round"><path d="M15 3h6v6"/><path d="M10 14 21 3"/><path d="M18 13v6a2 2 0 0 1-2 2H5a2 2 0 0 1-2-2V8a2 2 0 0 1 2-2h6"/></svg>
    <div id="hn">
      <div class="abs" style="left:0;top:0;width:746px;height:52px;background:#ff6600"></div>
      <div class="abs" style="left:12px;top:8px;width:36px;height:36px;border:2px solid #ffffff"></div>
      <span class="abs hb" style="left:57px;top:10px">Hacker News</span>
      <span class="abs ht" style="left:264px;top:10px">new</span>
      <span class="abs ht" style="left:338px;top:10px">|</span>
      <span class="abs ht" style="left:354px;top:10px">submit</span>
      <span class="hnum" style="top:71px">1.</span><div class="htri" style="top:81px"></div>
<span class="htitle" style="top:71px;letter-spacing:1.082px">Show HN: I built a Hacker News clone with</span>
<span class="htitle" style="top:104px;letter-spacing:0.746px">FastAPI and Next.js</span>
<span class="hsite" style="top:110px;left:363px;letter-spacing:1.148px">(example.com)</span>
<span class="hsub" style="top:137px;letter-spacing:1.185px">142 points by pg -14361 seconds ago | 2 comments</span>
<span class="hnum" style="top:174px">2.</span><div class="htri" style="top:184px"></div>
<span class="htitle" style="top:174px;letter-spacing:0.912px">Why SQLite is so great for embedded</span>
<span class="htitle" style="top:207px;letter-spacing:0.794px">applications</span>
<span class="hsite" style="top:213px;left:258.4px;letter-spacing:1.173px">(sqlite.org)</span>
<span class="hsub" style="top:240px;letter-spacing:1.168px">238 points by sama -7161 seconds ago | 1 comments</span>
<span class="hnum" style="top:277px">3.</span><div class="htri" style="top:287px"></div>
<span class="htitle" style="top:277px;letter-spacing:1.214px">Ask HN: What&#x27;s your favorite programming</span>
<span class="htitle" style="top:310px;letter-spacing:0.915px">language in 2024?</span>
<span class="hsub" style="top:343px;letter-spacing:1.133px">89 points by dang 39 seconds ago | 2 comments</span>
<span class="hnum" style="top:380px">4.</span><div class="htri" style="top:390px"></div>
<span class="htitle" style="top:380px;letter-spacing:1.007px">The unreasonable effectiveness of plain text</span>
<span class="hsite" style="top:419px;left:92px;letter-spacing:1.225px">(example.com)</span>
    </div>
  </div>

  <!-- N badge -->
  <svg class="abs" style="left:70px;top:549px" width="80" height="80" viewBox="0 0 80 80">
    <defs><linearGradient id="ng1" gradientUnits="userSpaceOnUse" x1="0" y1="33" x2="0" y2="47"><stop offset="0" stop-color="#fff"/><stop offset="1" stop-color="#fff" stop-opacity="0"/></linearGradient>
    <linearGradient id="ng2" gradientUnits="userSpaceOnUse" x1="29" y1="29.5" x2="53" y2="55"><stop offset=".6" stop-color="#fff"/><stop offset="1" stop-color="#fff" stop-opacity="0"/></linearGradient></defs>
    <circle cx="40" cy="40" r="39.5" fill="#000" opacity=".25"/>
    <circle cx="40" cy="40" r="37.3" fill="#2d2d2d" stroke="#1b1b1b" stroke-width="1.4"/>
    <circle cx="40" cy="40" r="36" fill="none" stroke="#4a4a4a" stroke-width="1"/>
    <path d="M29 51.5V29.5" stroke="#fff" stroke-width="2.6" fill="none"/>
    <path d="M29 29.5L52.5 54.5" stroke="url(#ng2)" stroke-width="2.8" fill="none"/>
    <path d="M50.3 29.5V46" stroke="url(#ng1)" stroke-width="2.6" fill="none"/>
  </svg>

  <!-- chat bubble -->
  <div id="chat">
    <div id="bubble"><div class="cl" style="top:16px"><span style="letter-spacing:0.639px">Perfect! I&#x27;ve successfully transformed your starter</span></div>
<div class="cl" style="top:56px"><span style="letter-spacing:0.594px">project into a </span><b style="letter-spacing:0.379px">fully functional Hacker News clone</b></div>
<div class="cl" style="top:96px"><span style="letter-spacing:0.217px">with SQLAlchemy ORM and SQLite database.</span></div>
<div class="cl" style="top:136px"><span style="letter-spacing:0.525px">Here&#x27;s what was built:</span></div>
<div class="cl" style="top:176px"><span style="letter-spacing:0.09px">Backend (FastAPI + SQLAlchemy + SQLite)</span></div>
<div class="cl" style="top:216px"><b style="letter-spacing:0.471px">Database Models:</b></div>
<div class="cl" style="top:256px"><b style="letter-spacing:0.31px">User</b><span style="letter-spacing:0.584px"> - username, posts, comments, votes</span></div>
<div class="cl" style="top:296px"><b style="letter-spacing:-0.144px">Post</b><span style="letter-spacing:0.676px"> - title, url/text, author, score, timestamps</span></div>
<div class="cl" style="top:336px"><b style="letter-spacing:0.555px">Comment</b><span style="letter-spacing:0.732px"> - nested comments with self-referential</span></div>
<div class="cl" style="top:376px"><span style="letter-spacing:0.549px">parent/child relationships</span></div>
<div class="cl" style="top:416px"><b style="letter-spacing:0.801px">Vote</b><span style="letter-spacing:0.676px"> - upvote tracking per user/post</span></div>
<div class="cl" style="top:456px"><b style="letter-spacing:-0.011px">API Endpoints:</b></div>
<div class="cl" style="top:496px"><code>GET /api/posts/</code><span style="letter-spacing:0.667px"> - list all posts with comment</span></div>
<div class="cl" style="top:536px"><span style="letter-spacing:0.617px">counts</span></div>
<div class="cl" style="top:576px"><code>GET /api/posts/{id}</code><span style="letter-spacing:0.681px"> - get single post</span></div>
<div class="cl" style="top:616px"><code>POST /api/posts/</code><span style="letter-spacing:0.592px"> - create new post</span></div>
<div class="cl" style="top:656px"><code>POST /api/posts/{id}/vote</code><span style="letter-spacing:1.228px"> - upvote</span></div></div>
  </div>
  <div class="abs" style="left:753px;top:790px;width:66px;height:66px;border-radius:50%;background:#0a0a0a;border:2px solid #353535;box-shadow:0 0 14px 4px rgba(0,0,0,.45)">
    <svg class="abs" style="left:15px;top:15px" width="32" height="32" viewBox="0 0 24 24" fill="none" stroke="#f2f2ea" stroke-width="2" stroke-linecap="round"><path d="M4 6h16M9 12h11M12 18h8"/><circle cx="3.3" cy="17" r="5.5" fill="#f4f4ec" stroke="none"/><path d="M3.3 13.9l2.9 4.9H0.4z" fill="#0c0c0c" stroke="none"/></svg>
  </div>
  <div class="abs" style="left:820px;top:1124px;width:12px;height:85px;background:#2b2b2b;border-radius:6px 0 0 6px"></div>

  <!-- model select -->
  <div class="abs" style="left:336px;top:1351px;width:470px;height:56px;border:2px solid #1c1c1c;border-radius:10px;background:#0e0e0e">
    <span class="abs" style="left:24px;top:0;line-height:55px;font-size:29px;letter-spacing:.55px;color:#f2f2f2;white-space:nowrap">anthropic/claude-sonnet-4.5</span>
    <svg class="abs" style="left:435px;top:10px" width="32" height="32" viewBox="0 0 24 24" fill="none" stroke="#ededed" stroke-width="2" stroke-linecap="round" stroke-linejoin="round"><path d="m6 9 6 6 6-6"/></svg>
  </div>
  <div class="abs" style="left:0;top:1424px;width:832px;height:2px;background:#1c1c1c"></div>
  <div class="abs" style="left:32px;top:1458px;width:694px;height:116px;border:2px solid #1c1c1c;border-radius:10px;background:#0b0b0b">
    <span class="abs" style="left:23px;top:20px;line-height:36px;font-size:29px;color:#8f8f8f;white-space:nowrap">Plan, search, build anything</span>
  </div>
  <div class="abs" style="left:742px;top:1510px;width:64px;height:64px;border-radius:8px;background:#0f4392">
    <svg class="abs" style="left:16px;top:16px" width="32" height="32" viewBox="0 0 24 24" fill="none" stroke="#8d8d8d" stroke-width="2" stroke-linecap="round" stroke-linejoin="round"><path d="M14.536 21.686a.5.5 0 0 0 .937-.024l6.5-19a.496.496 0 0 0-.635-.635l-19 6.5a.5.5 0 0 0-.024.937l7.93 3.18a2 2 0 0 1 1.112 1.11z"/><path d="m21.854 2.147-10.94 10.939"/></svg>
  </div>
</div>

<!-- STATUS -->
<div id="status">
  <div class="abs" style="left:0;top:0;width:84px;height:48px;background:#2f7cf6"><svg class="abs" style="left:24px;top:13px" width="28" height="24" viewBox="0 0 28 24"><path d="M14 0L28 24H0z" fill="#f5f5f5"/></svg></div>
  <div class="abs" style="left:100px;top:0;width:266px;height:60px;border:2px solid #1c1c1c;border-radius:10px;background:#101010"><span class="abs" style="left:17px;top:0;line-height:48px;font-size:25px;letter-spacing:.25px;white-space:nowrap;color:#ededed">Sandbox out of sync</span></div>
  <span class="abs" style="left:2765px;top:0;line-height:52px;font-size:25.5px;white-space:nowrap">Python</span>
  <span class="abs" style="left:2876px;top:0;line-height:52px;font-size:24px;white-space:nowrap">Ln 15, Col 1</span>
  <div class="abs" style="left:3020px;top:36px;width:12px;height:12px;background:radial-gradient(circle at 0 0,rgba(0,0,0,0) 11px,#cfcfcf 12.5px)"></div>
  <div class="abs" style="left:0;top:40px;width:8px;height:8px;background:radial-gradient(circle at 100% 0,rgba(0,0,0,0) 7px,#050505 8.5px)"></div>
</div>

</div>
</body>
</html>
